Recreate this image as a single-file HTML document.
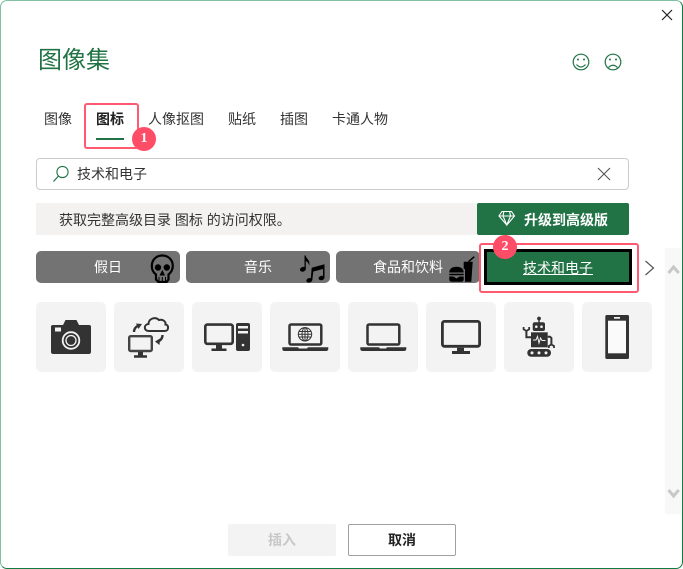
<!DOCTYPE html>
<html lang="zh">
<head>
<meta charset="utf-8">
<style>
html,body{margin:0;padding:0;background:#fff;width:683px;height:569px;overflow:hidden}
body{font-family:"Liberation Sans","Noto Sans CJK SC",sans-serif;color:#333;position:relative}
.a{position:absolute;white-space:nowrap}
.t{font-size:14px;line-height:20px;top:109px;color:#333}
.cat{position:absolute;top:251px;width:144px;height:32px;background:#737373;border-radius:5px;color:#fff;font-size:14px;line-height:32px}
.cat span{position:absolute;white-space:nowrap}
.th{position:absolute;top:302px;width:70px;height:70px;background:#f3f3f3;border-radius:5px}
.th svg{position:absolute;left:0;top:0}
.c{position:absolute;width:24px;height:24px;border-radius:50%;background:#ff4d67;color:#fff;font:bold 14px/24px "Liberation Serif",serif;text-align:center}
</style>
</head>
<body>
<!-- dialog frame -->
<div class="a" style="left:0;top:0;width:681px;height:567px;border:1px solid #7fc1a0;border-right-color:#107c41;border-bottom-color:#107c41;border-radius:7px"></div>

<div class="a" style="left:38px;top:43px;font-size:24px;line-height:36px;color:#217346">图像集</div>

<svg class="a" style="left:0;top:0" width="683" height="100">
<path d="M662 10L672 20M672 10L662 20" stroke="#222" stroke-width="1.200" fill="none"/>
<g fill="none" stroke="#217346" stroke-width="1.200">
<circle cx="581" cy="62" r="7.800"/><path d="M576.500 64.500Q581 69.500 585.500 64.500"/>
<circle cx="613" cy="62" r="7.800"/><path d="M608.500 67.500Q613 63 617.500 67.500"/>
</g>
<g fill="#217346"><circle cx="578" cy="59.500" r="1"/><circle cx="584" cy="59.500" r="1"/><circle cx="610" cy="59.500" r="1"/><circle cx="616" cy="59.500" r="1"/></g>
</svg>

<!-- tabs -->
<div class="a t" style="left:44px">图像</div>
<div class="a t" style="left:96px;font-weight:bold;color:#222">图标</div>
<div class="a t" style="left:148px">人像抠图</div>
<div class="a t" style="left:228px">贴纸</div>
<div class="a t" style="left:280px">插图</div>
<div class="a t" style="left:332px">卡通人物</div>
<div class="a" style="left:96px;top:138px;width:28px;height:2px;background:#217346"></div>
<div class="a" style="left:84px;top:103px;width:51px;height:42px;border:2px solid #ff5a70;border-radius:3px"></div>
<div class="c" style="left:132px;top:127px">1</div>

<!-- search -->
<div class="a" style="left:36px;top:158px;width:591px;height:30px;border:1px solid #ccc;border-radius:4px"></div>
<svg class="a" style="left:50px;top:162px" width="24" height="24"><circle cx="12.500" cy="10" r="5.600" fill="none" stroke="#217346" stroke-width="1.100"/><path d="M3.500 19.500L8.500 14" stroke="#217346" stroke-width="1.200"/></svg>
<div class="a" style="left:77px;top:164px;font-size:14px;line-height:20px;color:#333">技术和电子</div>
<svg class="a" style="left:596px;top:166px" width="16" height="16"><path d="M2 2L14 14M14 2L2 14" stroke="#555" stroke-width="1.100" fill="none"/></svg>

<!-- banner -->
<div class="a" style="left:36px;top:203px;width:441px;height:32px;background:#f3f2f1"></div>
<div class="a" style="left:59px;top:210px;font-size:14px;line-height:20px;color:#333">获取完整高级目录 图标 的访问权限。</div>
<div class="a" style="left:477px;top:203px;width:152px;height:32px;background:#217346;border-radius:2px"></div>
<svg class="a" style="left:497px;top:210px" width="20" height="18" fill="none" stroke="#fff" stroke-width="1.100"><path d="M5 1.500H14.500L17.500 6L9.800 15L2 6ZM2 6H17.500M6.800 1.800L6 6L9.800 15L13.500 6L12.700 1.800"/></svg>
<div class="a" style="left:524px;top:210px;font-size:14px;line-height:20px;color:#fff;font-weight:bold">升级到高级版</div>

<!-- categories -->
<div class="cat" style="left:36px"><span style="left:58px">假日</span>
<svg style="position:absolute;left:112px;top:3px" width="30" height="29"><path d="M14.300 1.500C8 1.500 3.800 6 3.800 12C3.800 16 5.300 18.500 8 20.500V25.500L10.500 28H18.500L20.500 25.500V20.500C23 18.500 24.800 16 24.800 12C24.800 6 20.500 1.500 14.300 1.500Z" fill="none" stroke="#000" stroke-width="2.200"/><circle cx="10" cy="13.500" r="3.200" fill="#000"/><circle cx="18.800" cy="13.500" r="3.200" fill="#000"/><path d="M14.300 17L12.300 21H16.300Z M11 23V28M14.300 23V28M17.500 23V28" fill="#000" stroke="#000"/></svg>
</div>
<div class="cat" style="left:186px"><span style="left:58px">音乐</span>
<svg style="position:absolute;left:112px;top:3px" width="32" height="29" fill="#000"><ellipse cx="4.900" cy="15.300" rx="3" ry="2.300" transform="rotate(-20 4.900 15.300)"/><path d="M6.500 15V1.500H7.800C8 5 12.500 5.500 11.300 11.700C10.500 8.500 9 7.500 7.800 7V15Z"/><ellipse cx="11.300" cy="26.300" rx="3" ry="2.200" transform="rotate(-15 11.300 26.300)"/><ellipse cx="23.500" cy="24" rx="3" ry="2.200" transform="rotate(-15 23.500 24)"/><path d="M12.700 26L13.700 13.700L26.500 10.300V24H25V15L15.300 17.500L14.300 26Z"/></svg>
</div>
<div class="cat" style="left:336px"><span style="left:37px">食品和饮料</span>
<svg style="position:absolute;left:112px;top:3px" width="30" height="29" fill="#000"><path d="M15.700 7.700H24.700L23.300 27.700H17V15H15.700Z"/><path d="M20.500 7.700L26.300 2.700" stroke="#000" stroke-width="1.500" fill="none"/><path d="M1.300 18.500C1.300 14.500 4.500 12.700 8.500 12.700C12.500 12.700 15.700 14.500 15.700 18.500ZM1.300 19.800H15.700V21.300H1.300ZM1.300 22.500H5.500L8.500 24.500L11.500 22.500H15.700V25.500C15.700 27 14.700 27.700 13.500 27.700H3.500C2.300 27.700 1.300 27 1.300 25.500Z"/></svg>
</div>
<div class="a" style="left:484px;top:249px;width:142px;height:30px;border:3px solid #000;background:#217346;color:#fff;font-size:14px;line-height:32px;text-align:center;text-decoration:underline">技术和电子</div>
<div class="a" style="left:479px;top:243px;width:156px;height:46px;border:2px solid #ff5a70;border-radius:3px"></div>
<div class="c" style="left:493px;top:235px">2</div>

<svg class="a" style="left:642px;top:257px" width="16" height="20"><path d="M3.500 4L11.500 11L3.500 18" fill="none" stroke="#555" stroke-width="1.200"/></svg>

<!-- scrollbar -->
<div class="a" style="left:665px;top:248px;width:16px;height:266px;background:#f8f8f8"></div>
<svg class="a" style="left:665px;top:255px" width="16" height="250" fill="none" stroke="#c8c8c8" stroke-width="3"><path d="M3.500 18L8.600 12L13.700 18"/><path d="M3.500 235L8.600 241L13.700 235"/></svg>

<!-- thumbnails -->
<div class="th" style="left:36px"><svg width="70" height="70" fill="#333"><path d="M15 24.500C15 23.500 15.800 23 17 23H27L29.500 18H40.500L43 23H53C54.200 23 55 23.500 55 24.500V50C55 51 54.200 52 53 52H17C15.800 52 15 51 15 50Z"/><rect x="19" y="25.500" width="6" height="4" fill="#f3f3f3"/><circle cx="35" cy="38.500" r="8.300" fill="none" stroke="#f3f3f3" stroke-width="1.800"/><circle cx="35" cy="38.500" r="5" fill="none" stroke="#f3f3f3" stroke-width="1.300"/></svg></div>
<div class="th" style="left:114px"><svg width="70" height="70"><path d="M35 29C29.500 29 29.500 22.500 34.500 22C34.500 17 41 14 45 18C49 17 52 19.500 51.500 22.500C55 22.500 55 29 51 29Z" fill="none" stroke="#333" stroke-width="2"/><rect x="15.200" y="34.200" width="22.600" height="14.800" rx="1.500" fill="none" stroke="#444" stroke-width="2.400"/><path d="M24 50H29V53.200H33V55.700H20V53.200H24Z" fill="#333"/><path d="M20 30C20 27 21 25.500 23.500 24" fill="none" stroke="#333" stroke-width="2.400"/><path d="M22 21.500L28 22L24.500 27Z" fill="#333"/><path d="M48.500 33C48.500 36 47 38 44.500 39.500" fill="none" stroke="#333" stroke-width="2.400"/><path d="M46 36.500L41 39.500L45.500 43Z" fill="#333"/></svg></div>
<div class="th" style="left:192px"><svg width="70" height="70"><rect x="13.300" y="22.600" width="27.400" height="19.200" rx="2" fill="none" stroke="#333" stroke-width="2.600"/><path d="M24 43H30V46.500H34.500V49H19.500V46.500H24Z" fill="#333"/><rect x="44" y="21" width="14" height="28" rx="2" fill="#333"/><rect x="46" y="24" width="10" height="2.500" fill="#f3f3f3"/><rect x="46" y="29" width="10" height="2.500" fill="#f3f3f3"/><circle cx="51" cy="43" r="1.300" fill="#f3f3f3"/></svg></div>
<div class="th" style="left:270px"><svg width="70" height="70"><rect x="19.500" y="22.500" width="31.800" height="20" rx="1.500" fill="#f3f3f3" stroke="#333" stroke-width="2.500"/><path d="M12.300 45.300H28L29 46.500H33H37L38 45.300H58.300V47C58.300 48.300 57.300 49 56 49H14.500C13.300 49 12.300 48.300 12.300 47Z" fill="#333"/><g fill="none" stroke="#333" stroke-width="1"><circle cx="35" cy="32.300" r="6.700"/><ellipse cx="35" cy="32.300" rx="3" ry="6.700"/><path d="M35 25.600V39M28.300 32.300H41.700M29 29.500H41M29 35H41"/></g></svg></div>
<div class="th" style="left:348px"><svg width="70" height="70"><rect x="19.500" y="22.500" width="31.800" height="20" rx="1.500" fill="none" stroke="#333" stroke-width="2.500"/><path d="M12.300 45.300H31L32 46.500H38L39 45.300H58.300V47C58.300 48.300 57.300 49 56 49H14.500C13.300 49 12.300 48.300 12.300 47Z" fill="#333"/></svg></div>
<div class="th" style="left:426px"><svg width="70" height="70"><rect x="16.400" y="19.400" width="37.200" height="24.900" rx="2" fill="none" stroke="#333" stroke-width="2.800"/><path d="M31 45.700H38V49H44V52H26V49H31Z" fill="#333"/></svg></div>
<div class="th" style="left:504px"><svg width="70" height="70" fill="#333"><circle cx="35" cy="16.500" r="1.900"/><rect x="34.300" y="17" width="1.400" height="4"/><rect x="28.700" y="20.300" width="12.300" height="8.700" rx="2"/><circle cx="32.300" cy="24.700" r="1.300" fill="#f3f3f3"/><circle cx="37.500" cy="24.700" r="1.300" fill="#f3f3f3"/><rect x="27" y="30.300" width="16.700" height="15"/><path d="M29 38H32L33.500 34.500L35 41L36.500 36L38 38.500H41.500" fill="none" stroke="#f3f3f3" stroke-width="1"/><path d="M27 35.300H22.400V28" fill="none" stroke="#333" stroke-width="2"/><path d="M19.600 25V27.300L22.400 29L25.200 27.300V25" fill="none" stroke="#333" stroke-width="1.800"/><path d="M43.700 34.700H46L47.400 36V43" fill="none" stroke="#333" stroke-width="2"/><path d="M44.800 46V44L47.400 42.500L50 44V46" fill="none" stroke="#333" stroke-width="1.800"/><rect x="23.300" y="47" width="23.700" height="7.700" rx="3.800"/><circle cx="28" cy="50.900" r="1.500" fill="#f3f3f3"/><circle cx="35" cy="50.900" r="1.500" fill="#f3f3f3"/><circle cx="42" cy="50.900" r="1.500" fill="#f3f3f3"/></svg></div>
<div class="th" style="left:582px"><svg width="70" height="70"><rect x="23.300" y="13" width="23.700" height="44" rx="1.500" fill="#333"/><rect x="26" y="18.700" width="18" height="32.600" fill="#fafafa"/><rect x="32" y="15" width="6" height="1.700" fill="#f3f3f3"/></svg></div>

<!-- buttons -->
<div class="a" style="left:228px;top:524px;width:108px;height:32px;background:#f3f3f3;border-radius:2px;color:#c8c8c8;font-size:14px;font-weight:bold;line-height:32px;text-align:center">插入</div>
<div class="a" style="left:348px;top:524px;width:106px;height:30px;border:1px solid #a0a0a0;border-radius:2px;color:#222;font-size:14px;font-weight:bold;line-height:31px;text-align:center">取消</div>
</body>
</html>
